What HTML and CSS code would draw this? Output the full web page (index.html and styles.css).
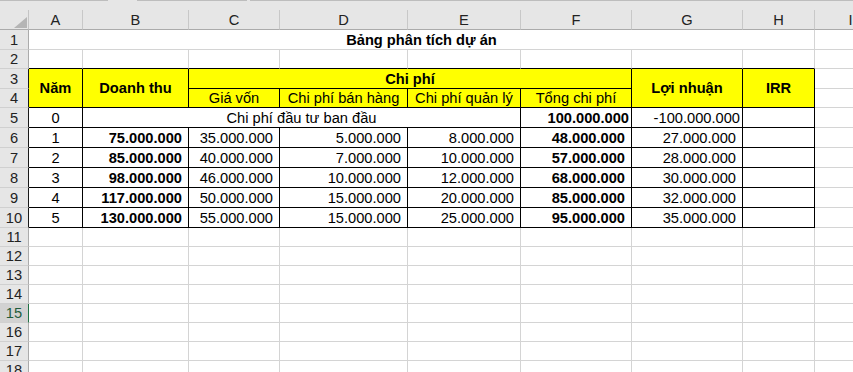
FILE: index.html
```html
<!DOCTYPE html>
<html lang="vi">
<head>
<meta charset="utf-8">
<title>Bảng phân tích dự án</title>
<link rel="stylesheet" href="styles.css">
</head>
<body>
<div class="sheet">
  <div class="topbar"><span class="seg s1"></span><span class="gap g1"></span><span class="seg s2"></span><span class="gap g2"></span><span class="seg s3"></span></div>

  <div class="corner"><svg class="tri" width="13" height="11" viewBox="0 0 13 11"><polygon points="13,0 13,11 0,11" fill="#b5b5b5"/></svg></div>
  <div class="ch">A</div><div class="ch">B</div><div class="ch">C</div><div class="ch">D</div><div class="ch">E</div><div class="ch">F</div><div class="ch">G</div><div class="ch">H</div><div class="ch">I</div>

  <div class="rh">1</div><div class="c ctr b span8">Bảng phân tích dự án</div><div class="c"></div>

  <div class="rh">2</div><div class="c bb"></div><div class="c bb"></div><div class="c bb"></div><div class="c bb"></div><div class="c bb"></div><div class="c bb"></div><div class="c bb"></div><div class="c bb"></div><div class="c"></div>

  <div class="rh rt">3</div><div class="t y b ctr rs2">Năm</div><div class="t y b ctr rs2">Doanh thu</div><div class="t y b ctr span4">Chi phí</div><div class="t y b ctr rs2">Lợi nhuận</div><div class="t y b ctr rs2">IRR</div><div class="c"></div>

  <div class="rh rt">4</div><div class="t y ctr">Giá vốn</div><div class="t y ctr">Chi phí bán hàng</div><div class="t y ctr">Chi phí quản lý</div><div class="t y ctr">Tổng chi phí</div><div class="c"></div>

  <div class="rh rt">5</div><div class="t ctr">0</div><div class="t ctr span4">Chi phí đầu tư ban đầu</div><div class="t r p2 b">100.000.000</div><div class="t r p2">-100.000.000</div><div class="t"></div><div class="c"></div>

  <div class="rh rt">6</div><div class="t ctr">1</div><div class="t r b">75.000.000</div><div class="t r">35.000.000</div><div class="t r">5.000.000</div><div class="t r">8.000.000</div><div class="t r b">48.000.000</div><div class="t r">27.000.000</div><div class="t"></div><div class="c"></div>

  <div class="rh rt">7</div><div class="t ctr">2</div><div class="t r b">85.000.000</div><div class="t r">40.000.000</div><div class="t r">7.000.000</div><div class="t r">10.000.000</div><div class="t r b">57.000.000</div><div class="t r">28.000.000</div><div class="t"></div><div class="c"></div>

  <div class="rh rt">8</div><div class="t ctr">3</div><div class="t r b">98.000.000</div><div class="t r">46.000.000</div><div class="t r">10.000.000</div><div class="t r">12.000.000</div><div class="t r b">68.000.000</div><div class="t r">30.000.000</div><div class="t"></div><div class="c"></div>

  <div class="rh rt">9</div><div class="t ctr">4</div><div class="t r b">117.000.000</div><div class="t r">50.000.000</div><div class="t r">15.000.000</div><div class="t r">20.000.000</div><div class="t r b">85.000.000</div><div class="t r">32.000.000</div><div class="t"></div><div class="c"></div>

  <div class="rh rt">10</div><div class="t ctr">5</div><div class="t r b">130.000.000</div><div class="t r">55.000.000</div><div class="t r">15.000.000</div><div class="t r">25.000.000</div><div class="t r b">95.000.000</div><div class="t r">35.000.000</div><div class="t"></div><div class="c"></div>

  <div class="rh">11</div><div class="c"></div><div class="c"></div><div class="c"></div><div class="c"></div><div class="c"></div><div class="c"></div><div class="c"></div><div class="c"></div><div class="c"></div>
  <div class="rh">12</div><div class="c"></div><div class="c"></div><div class="c"></div><div class="c"></div><div class="c"></div><div class="c"></div><div class="c"></div><div class="c"></div><div class="c"></div>
  <div class="rh">13</div><div class="c"></div><div class="c"></div><div class="c"></div><div class="c"></div><div class="c"></div><div class="c"></div><div class="c"></div><div class="c"></div><div class="c"></div>
  <div class="rh">14</div><div class="c"></div><div class="c"></div><div class="c"></div><div class="c"></div><div class="c"></div><div class="c"></div><div class="c"></div><div class="c"></div><div class="c"></div>
  <div class="rh sel">15</div><div class="c"></div><div class="c"></div><div class="c"></div><div class="c"></div><div class="c"></div><div class="c"></div><div class="c"></div><div class="c"></div><div class="c"></div>
  <div class="rh">16</div><div class="c"></div><div class="c"></div><div class="c"></div><div class="c"></div><div class="c"></div><div class="c"></div><div class="c"></div><div class="c"></div><div class="c"></div>
  <div class="rh">17</div><div class="c"></div><div class="c"></div><div class="c"></div><div class="c"></div><div class="c"></div><div class="c"></div><div class="c"></div><div class="c"></div><div class="c"></div>
  <div class="rh">18</div><div class="c"></div><div class="c"></div><div class="c"></div><div class="c"></div><div class="c"></div><div class="c"></div><div class="c"></div><div class="c"></div><div class="c"></div>
</div>
</body>
</html>
```

FILE: styles.css
```css
html, body {
  margin: 0;
  padding: 0;
  background: #ffffff;
  overflow: hidden;
}

.sheet {
  display: grid;
  grid-template-columns: 29px 54px 106px 91px 128px 113px 111px 111px 72px 72px;
  grid-template-rows: 10px 20px 20px 19px 20px 19px 20px 20px 20px 20px 20px 20px 19px 19px 19px 19px 19px 19px 19px 19px;
  width: 887px;
  font-family: "Liberation Sans", Arial, sans-serif;
  font-size: 14.67px;
  color: #000;
}

.sheet > div {
  box-sizing: border-box;
  display: flex;
  align-items: center;
  white-space: nowrap;
  overflow: hidden;
  min-width: 0;
}

.topbar {
  grid-column: 1 / -1;
  background: #e6e6e6;
  align-items: flex-start !important;
}

.seg {
  display: block;
  height: 1px;
  background: #bdbdbd;
}

.gap {
  display: block;
  height: 1px;
}

.s1 { width: 108px; }
.g1 { width: 29px; }
.s2 { width: 110px; }
.g2 { width: 3px; }
.s3 { flex: 1; }

.corner {
  background: #e6e6e6;
  border-right: 1px solid #c4c4c4;
  border-bottom: 1px solid #ababab;
  position: relative;
}

.tri {
  position: absolute;
  left: 14px;
  top: 7px;
}

.ch {
  background: #e6e6e6;
  border-right: 1px solid #c8c8c8;
  border-bottom: 1px solid #ababab;
  justify-content: center;
  color: #222;
}

.rh {
  background: #e6e6e6;
  border-right: 1px solid #ababab;
  border-bottom: 1px solid #d0d0d0;
  justify-content: center;
  color: #222;
}

.rh.rt {
  border-right-color: #1a1a1a;
}

.rh.sel {
  background: #d2d2d2;
  border-right-color: #217346;
  color: #1f5c3c;
}

.c {
  border-right: 1px solid #d4d4d4;
  border-bottom: 1px solid #d4d4d4;
}

.c.bb {
  border-bottom-color: #000;
}

.t {
  border-right: 1px solid #000;
  border-bottom: 1px solid #000;
}

.y { background: #ffff00; }
.b { font-weight: bold; }
.ctr { justify-content: center; }
.r { justify-content: flex-end; padding-right: 6px; }
.r.p2 { padding-right: 2px; }

.span8 { grid-column: span 8; }
.span4 { grid-column: span 4; }
.rs2 { grid-row: span 2; }
```
